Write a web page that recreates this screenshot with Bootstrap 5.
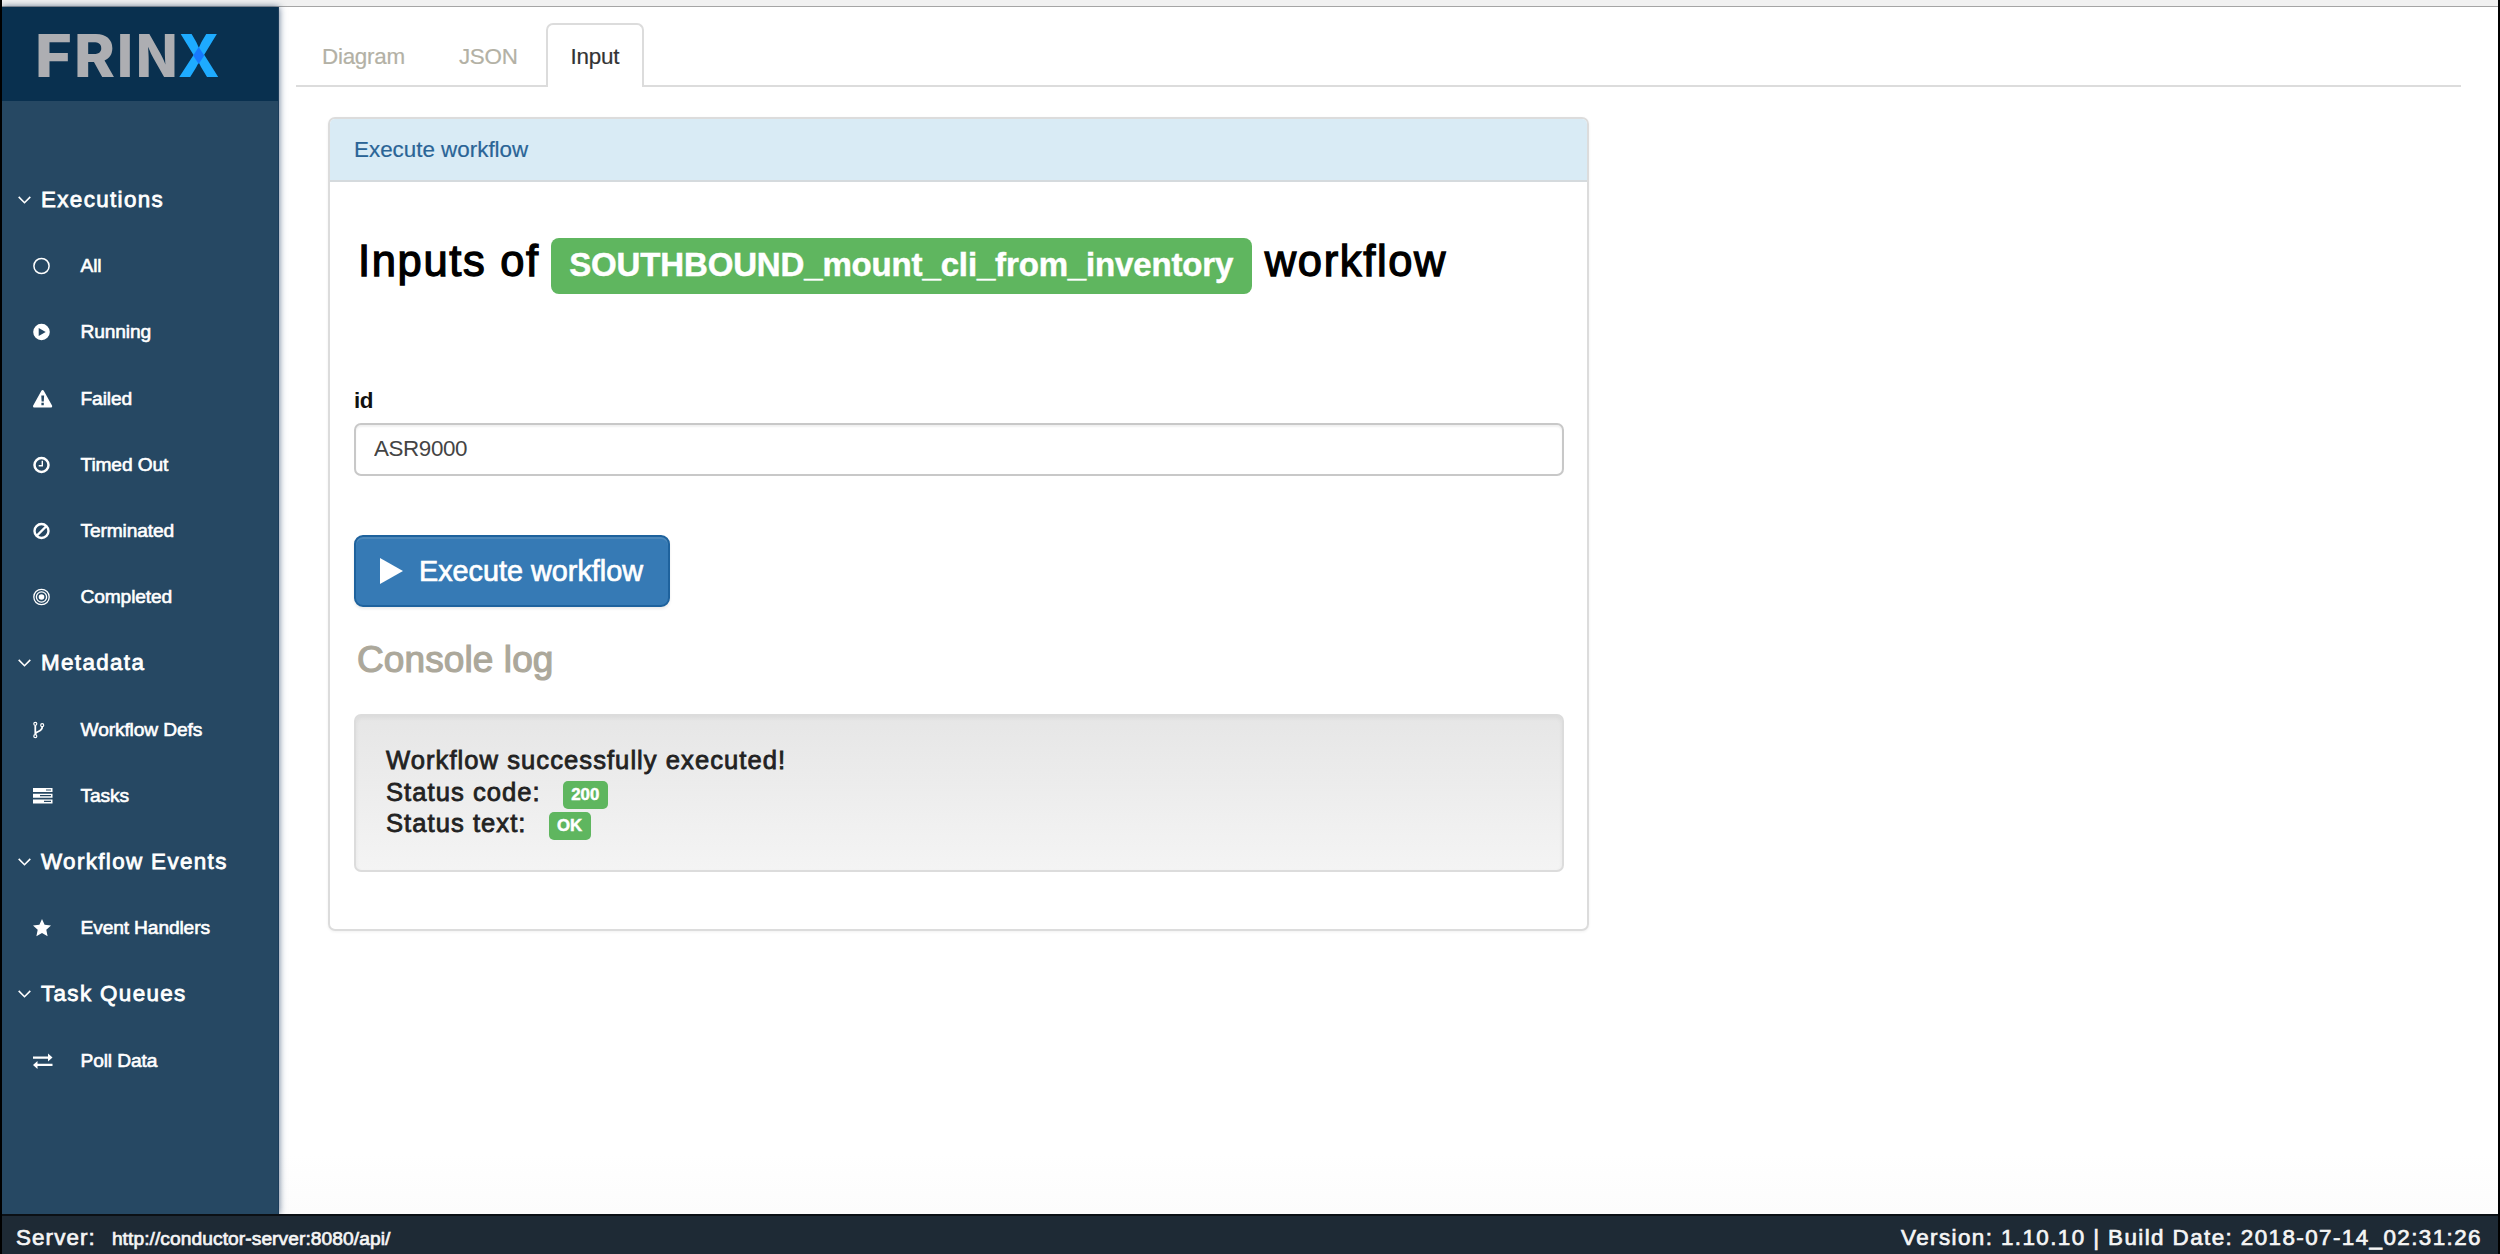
<!DOCTYPE html>
<html lang="en">
<head>
<meta charset="utf-8">
<title>FRINX Conductor</title>
<link rel="stylesheet" href="https://cdn.jsdelivr.net/npm/bootstrap@5.3.0/dist/css/bootstrap.min.css">
<script src="https://cdn.jsdelivr.net/npm/bootstrap@5.3.0/dist/js/bootstrap.bundle.min.js"></script>
<style>
body{font-family:"Liberation Sans",Arial,sans-serif;font-size:22.4px;line-height:32px;color:#222;background:#fff}
.shell{height:1254px;border-left:2px solid #000;border-right:2px solid #000}
.topstrip{height:7px;background:#f1f1f1;border-bottom:1px solid #a5a5a5;flex:none}
.side{width:277px;flex:none;background:#264863;color:#fff;box-shadow:0 0 7px rgba(20,50,90,.7);border-right:1px solid #1c3d5b;position:relative;z-index:1}
.brand{height:94px;background:#09304f}
.brand svg{display:block}
.menu{padding-top:66px}
.menu-head,.menu-item{height:66.2px;color:#fff;text-decoration:none;white-space:nowrap}
.menu-head{padding-left:16px;letter-spacing:1.36px;-webkit-text-stroke:.8px #fff}
.menu-head svg{width:13px;height:8px;margin-right:10px}
.menu-item{padding-left:31px;font-size:19.2px;letter-spacing:-.13px;-webkit-text-stroke:.6px #fff}
.menu-item svg{width:20px;height:18px;margin-right:27.5px}
.main-area{padding:16px 37px 0 17px;background:linear-gradient(#fff 95%,#fcfcfc)}
.tabs-bar{--bs-nav-tabs-border-width:1.5px;--bs-nav-tabs-border-color:#d6d6d6;height:64px;border-bottom:2px solid #dcdcdc}
.tabs-bar .nav-link{height:64px;padding:16px 24px;line-height:31px;color:#b3b1a5;border:2px solid transparent;border-bottom:0;border-radius:7px 7px 0 0;letter-spacing:-.25px;-webkit-text-stroke:.2px}
.tabs-bar .nav-link.active{color:#333;border-color:#dcdcdc;padding:16px 23px}
.tabs-bar .nav-item+.nav-item{margin-left:2px}
.panel-box{width:1261px;height:814px;margin:30px 0 0 32px;border:2px solid #dcdcdc;border-radius:7px;box-shadow:0 1px 3px rgba(0,0,0,.06)}
.panel-top{height:63px;background:#d9ebf5;border-bottom:2px solid #d5dadd;color:#2a6496;padding:15px 24px;border-radius:5px 5px 0 0;-webkit-text-stroke:.2px #2a6496}
.panel-main{padding:0 23px 0 24px}
.wf-title{margin:51px 0 0 4px;height:68px;font-size:43.5px;line-height:56px;color:#000;letter-spacing:1.65px;-webkit-text-stroke:1.3px #000;white-space:nowrap}
.wf-name{height:56px;width:701px;margin:5px 13px 0 11px;border-radius:8px;background:#5fb65f;color:#fff;font-size:33px;font-weight:700;letter-spacing:-.15px;line-height:54px;-webkit-text-stroke:.5px #fff}
.id-label{margin-top:84px;height:38px;font-weight:700;color:#111;letter-spacing:-.4px;line-height:31px}
.id-field{height:53px;border:2px solid #c8c8c8;border-radius:7px;font-size:22.4px;color:#444;padding:0 18px 2px;letter-spacing:-.4px;box-shadow:inset 0 2px 2px rgba(0,0,0,.06)}
.run-btn{margin-top:59px;width:316px;height:72px;border:2px solid #1e629d;border-radius:9px;background:#367ab5;font-size:28.8px;line-height:36px;padding:0 0 0 24px;box-shadow:inset 0 2px 0 #4d88ba,0 2px 3px rgba(0,0,0,.08);-webkit-text-stroke:.7px #fff}
.run-btn:hover{background:#367ab5}
.run-btn svg{width:23px;height:26px;margin-right:16px}
.log-title{margin:33px 0 0 3px;height:74px;font-size:37px;line-height:40px;color:#aca89b;letter-spacing:.1px;-webkit-text-stroke:1.2px #aca89b}
.log-box{height:158px;border:2px solid #dcdcdc;border-radius:7px;padding:29px 0 0 30px;background:linear-gradient(#e6e6e6,#f4f4f4);box-shadow:inset 0 2px 4px rgba(0,0,0,.05);font-size:25.6px;line-height:31.7px;letter-spacing:1.04px;-webkit-text-stroke:.8px #222}
.log-tag{height:28px;margin:4px 0 0 22px;padding:0 8.5px;border-radius:5px;background:#5fb65f;color:#fff;font-size:16.8px;font-weight:700;line-height:28px;letter-spacing:0;-webkit-text-stroke:.5px #fff}
.log-line{height:31.7px}
.foot{height:40px;flex:none;background:#1e2a35;border-top:2px solid #0b1015;color:#f5f5f5;padding:7px 16px 0 14px;line-height:30px;letter-spacing:1.42px;position:relative;z-index:2;-webkit-text-stroke:.7px #f5f5f5}
.foot-srv{letter-spacing:1.1px}
.foot-url{font-size:19.2px;letter-spacing:.07px;margin-left:16px}
</style>
</head>
<body>
<div class="shell d-flex flex-column overflow-hidden">
  <div class="topstrip"></div>
  <div class="d-flex flex-grow-1">
    <aside class="side">
      <div class="brand">
        <svg width="276" height="94" viewBox="2 7 276 94" font-family="Inter" font-weight="800" font-size="59" fill="#adaeb2">
          <text transform="translate(35 77)" textLength="37" lengthAdjust="spacingAndGlyphs">F</text>
          <text transform="translate(74 77)" textLength="41" lengthAdjust="spacingAndGlyphs">R</text>
          <text transform="translate(117 77)" textLength="16" lengthAdjust="spacingAndGlyphs">I</text>
          <text transform="translate(136 77)" textLength="41.500" lengthAdjust="spacingAndGlyphs">N</text>
          <text transform="translate(178 77)" fill="#1eabff" textLength="41.500" lengthAdjust="spacingAndGlyphs">X</text>
          <path d="M198.700 47l5.500 8.500-5.500 8.500-5.500-8.500z" fill="#1779ff"/>
        </svg>
      </div>
      <nav class="menu d-flex flex-column">
        <a class="menu-head d-flex align-items-center"><svg viewBox="0 0 13 8" fill="none" stroke="#fff" stroke-width="1.600"><path d="M.7.900l5.800 5.800L12.300.9"/></svg>Executions</a>
        <a class="menu-item d-flex align-items-center"><svg viewBox="0 0 20 18" fill="none" stroke="#fff" stroke-width="1.500"><circle cx="8.500" cy="9" r="7.600"/></svg>All</a>
        <a class="menu-item d-flex align-items-center"><svg viewBox="0 0 20 18" fill="#fff"><path fill-rule="evenodd" d="M8.500.7a8.300 8.300 0 1 0 0 16.600 8.300 8.300 0 0 0 0-16.600zM5.700 5v8l7-4z"/></svg>Running</a>
        <a class="menu-item d-flex align-items-center"><svg viewBox="0 0 20 18" fill="#fff"><path fill-rule="evenodd" d="M8.400.8c.6-1 1.800-1 2.400 0l8.200 14.700c.5 1-.1 2-1.200 2H1.400c-1.100 0-1.700-1-1.200-2zM8.300 5.500l.3 6h2.200l.3-6zM8.400 12.800v2.400h2.400v-2.400z"/></svg>Failed</a>
        <a class="menu-item d-flex align-items-center"><svg viewBox="0 0 20 18" fill="none" stroke="#fff"><circle cx="8.500" cy="9" r="7" stroke-width="2.500"/><path d="M9.300 4.800v5H5.700" stroke-width="1.400"/></svg>Timed Out</a>
        <a class="menu-item d-flex align-items-center"><svg viewBox="0 0 20 18" fill="none" stroke="#fff" stroke-width="2.400"><circle cx="8.500" cy="9" r="7"/><path d="M3.500 14l10-10"/></svg>Terminated</a>
        <a class="menu-item d-flex align-items-center"><svg viewBox="0 0 20 18" fill="none" stroke="#fff" stroke-width="1.300"><circle cx="8.500" cy="9" r="7.700"/><circle cx="8.500" cy="9" r="5.100"/><circle cx="8.500" cy="9" r="2.800" fill="#fff" stroke="none"/></svg>Completed</a>
        <a class="menu-head d-flex align-items-center"><svg viewBox="0 0 13 8" fill="none" stroke="#fff" stroke-width="1.600"><path d="M.7.900l5.800 5.800L12.300.9"/></svg>Metadata</a>
        <a class="menu-item d-flex align-items-center"><svg viewBox="0 0 20 18" fill="none" stroke="#fff" stroke-width="1.200"><circle cx="2.300" cy="2.800" r="1.500"/><circle cx="2.300" cy="15.200" r="1.500"/><circle cx="9.200" cy="4.200" r="1.500"/><path d="M2.300 4.500v9c0-4 6.900-2 6.900-7.500" stroke-width="1.800"/></svg>Workflow Defs</a>
        <a class="menu-item d-flex align-items-center"><svg viewBox="0 0 20 18" fill="#fff"><path fill-rule="evenodd" d="M0 1h19.500v4H0zM13 2.400v1.200h5V2.400zM0 6.700h19.500v4H0zM7 8.100v1.200h11V8.100zM0 12.400h19.500v4H0zM11 13.800V15h7v-1.200z"/></svg>Tasks</a>
        <a class="menu-head d-flex align-items-center"><svg viewBox="0 0 13 8" fill="none" stroke="#fff" stroke-width="1.600"><path d="M.7.900l5.800 5.800L12.300.9"/></svg>Workflow Events</a>
        <a class="menu-item d-flex align-items-center"><svg viewBox="0 0 20 18" fill="#fff"><path d="M9 0l2.600 5.700 6.400.8-4.700 4.300 1.300 6.400L9 14.100l-5.600 3.100 1.300-6.400L0 6.500l6.400-.8z"/></svg>Event Handlers</a>
        <a class="menu-head d-flex align-items-center"><svg viewBox="0 0 13 8" fill="none" stroke="#fff" stroke-width="1.600"><path d="M.7.900l5.800 5.800L12.300.9"/></svg>Task Queues</a>
        <a class="menu-item d-flex align-items-center"><svg viewBox="0 0 20 18" fill="#fff"><path d="M0 4.400h15V1.500l4.500 4-4.500 4V6.800H0zM19.500 11.700h-15V8.900L0 12.900l4.500 4v-2.800h15z"/></svg>Poll Data</a>
      </nav>
    </aside>
    <main class="main-area flex-grow-1">
      <ul class="nav nav-tabs tabs-bar">
        <li class="nav-item"><a class="nav-link">Diagram</a></li>
        <li class="nav-item"><a class="nav-link">JSON</a></li>
        <li class="nav-item"><a class="nav-link active">Input</a></li>
      </ul>
      <section class="panel-box">
        <div class="panel-top">Execute workflow</div>
        <div class="panel-main">
          <h1 class="wf-title d-flex mb-0 fw-normal">Inputs of <span class="wf-name text-center">SOUTHBOUND_mount_cli_from_inventory</span> workflow</h1>
          <label class="id-label d-block" for="wfid">id</label>
          <input id="wfid" class="id-field form-control" value="ASR9000">
          <button class="run-btn btn btn-primary d-flex align-items-center"><svg viewBox="0 0 23 26" fill="#fff"><path d="M0 0l23 13L0 26z"/></svg>Execute workflow</button>
          <h3 class="log-title mb-0 fw-normal">Console log</h3>
          <div class="log-box">
            <div class="log-line">Workflow successfully executed!</div>
            <div class="log-line d-flex">Status code:<span class="log-tag">200</span></div>
            <div class="log-line d-flex">Status text:<span class="log-tag">OK</span></div>
          </div>
        </div>
      </section>
    </main>
  </div>
  <footer class="foot d-flex justify-content-between">
    <div class="foot-srv">Server:<span class="foot-url">http://conductor-server:8080/api/</span></div>
    <div>Version: 1.10.10 | Build Date: 2018-07-14_02:31:26</div>
  </footer>
</div>
</body>
</html>
